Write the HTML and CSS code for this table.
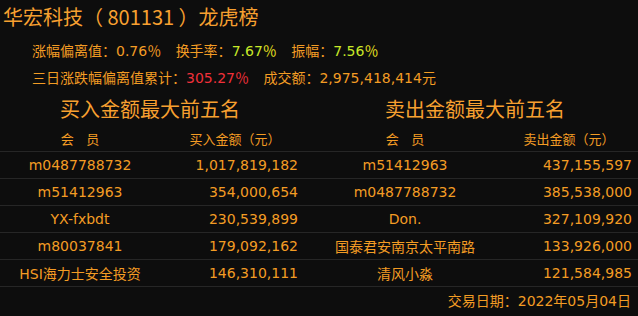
FILE: index.html
```html
<!DOCTYPE html>
<html lang="zh-CN">
<head>
  <meta charset="UTF-8">
  <title>华宏科技 龙虎榜</title>
  <link rel="stylesheet" href="styles.css">
</head>
<body>
  <div class="board">
    <h1 class="title">华宏科技（ 801131 ）龙虎榜</h1>

    <div class="stats">
      <div class="stat-line">
        <span class="stat">涨幅偏离值：<span class="orange">0.76％</span></span>
        <span class="stat">换手率：<span class="lime">7.67</span><span class="yellow">％</span></span>
        <span class="stat">振幅：<span class="lime">7.56</span><span class="yellow">％</span></span>
      </div>
      <div class="stat-line">
        <span class="stat">三日涨跌幅偏离值累计：<span class="red">305.27％</span></span>
        <span class="stat">成交额：2,975,418,414元</span>
      </div>
    </div>

    <div class="sections">
      <h2 class="section-title buy">买入金额最大前五名</h2>
      <h2 class="section-title sell">卖出金额最大前五名</h2>
    </div>

    <table class="rank">
      <thead>
        <tr>
          <th class="c-member">会&nbsp;&nbsp;&nbsp;员</th>
          <th class="c-amount">买入金额（元）</th>
          <th class="c-member2">会&nbsp;&nbsp;&nbsp;员</th>
          <th class="c-amount2">卖出金额（元）</th>
        </tr>
      </thead>
      <tbody>
        <tr>
          <td class="c-member">m0487788732</td>
          <td class="c-amount">1,017,819,182</td>
          <td class="c-member2">m51412963</td>
          <td class="c-amount2">437,155,597</td>
        </tr>
        <tr>
          <td class="c-member">m51412963</td>
          <td class="c-amount">354,000,654</td>
          <td class="c-member2">m0487788732</td>
          <td class="c-amount2">385,538,000</td>
        </tr>
        <tr>
          <td class="c-member">YX-fxbdt</td>
          <td class="c-amount">230,539,899</td>
          <td class="c-member2">Don.</td>
          <td class="c-amount2">327,109,920</td>
        </tr>
        <tr>
          <td class="c-member">m80037841</td>
          <td class="c-amount">179,092,162</td>
          <td class="c-member2">国泰君安南京太平南路</td>
          <td class="c-amount2">133,926,000</td>
        </tr>
        <tr>
          <td class="c-member">HSI海力士安全投资</td>
          <td class="c-amount">146,310,111</td>
          <td class="c-member2">清风小淼</td>
          <td class="c-amount2">121,584,985</td>
        </tr>
      </tbody>
    </table>

    <div class="trade-date">交易日期：2022年05月04日</div>
  </div>
</body>
</html>
```

FILE: styles.css
```css
html, body {
  margin: 0;
  padding: 0;
  background-color: #0d0d0d;
}
body {
  font-family: "DejaVu Sans", "Noto Sans CJK SC", sans-serif;
  font-size: 14px;
  color: #f39c24;
}
.board {
  width: 638px;
  height: 316px;
  overflow: hidden;
}
.title {
  margin: 0;
  padding: 4px 0 0 3px;
  height: 28px;
  font-family: "Noto Sans CJK SC", sans-serif;
  font-size: 20px;
  font-weight: normal;
  line-height: 26px;
  color: #f7a030;
}
.stats {
  padding: 6px 0 0 32px;
}
.stat-line {
  height: 27px;
  line-height: 27px;
  white-space: nowrap;
}
.stat {
  margin-right: 10px;
}
.orange { color: #f39c24; }
.lime { color: #c8e828; }
.yellow { color: #e8e020; }
.red { color: #f0303a; }

.sections {
  display: flex;
  height: 34px;
  align-items: center;
  margin-top: -1px;
}
.section-title {
  margin: 0;
  font-family: "Noto Sans CJK SC", sans-serif;
  font-size: 20px;
  font-weight: normal;
  text-align: center;
  color: #f7a030;
}
.section-title.buy { width: 300px; }
.section-title.sell { flex: 1; padding-left: 12px; }

.rank {
  width: 638px;
  border-collapse: collapse;
  table-layout: fixed;
}
.rank th {
  height: 26px;
  font-size: 13px;
  font-weight: normal;
  text-align: center;
  padding: 0;
  border-bottom: 1px solid #262626;
}
.rank td {
  height: 26px;
  padding: 0;
  border-bottom: 1px solid #262626;
}
.rank .c-member { width: 160px; text-align: center; }
.rank .c-amount { width: 150px; }
.rank .c-member2 { width: 190px; text-align: center; }
.rank .c-amount2 { width: 138px; }
.rank td.c-amount { text-align: right; padding-right: 12px; }
.rank td.c-amount2 { text-align: right; padding-right: 6px; }

.trade-date {
  height: 28px;
  line-height: 28px;
  text-align: right;
  padding-right: 7px;
}
```
